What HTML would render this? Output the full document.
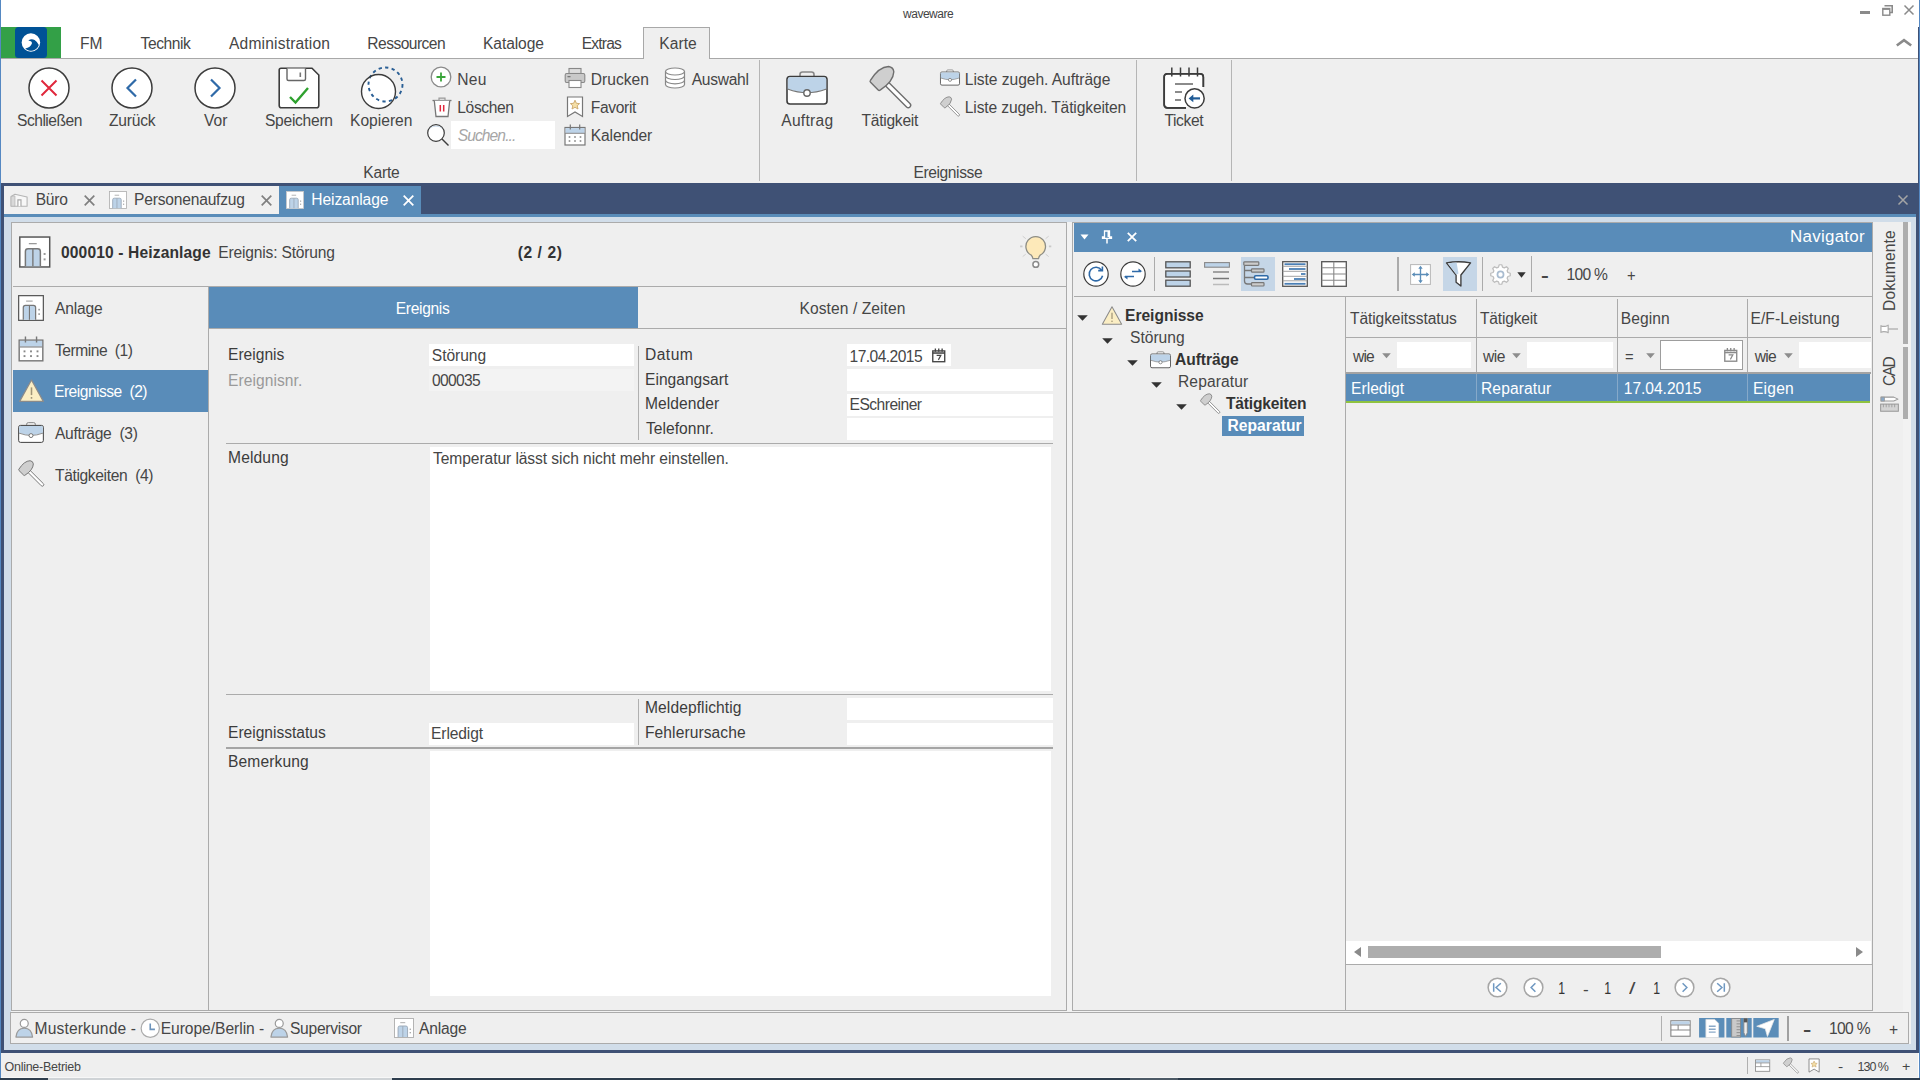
<!DOCTYPE html>
<html lang="de"><head><meta charset="utf-8"><title>waveware</title>
<style>
html,body{margin:0;padding:0;}
body{width:1920px;height:1080px;overflow:hidden;position:relative;background:#fff;font-family:"Liberation Sans",sans-serif;}
.a{position:absolute;}
.t{white-space:pre;margin:0;padding:0;}
svg{overflow:visible;}
</style></head><body>
<div class="a" style="left:0px;top:0px;width:1920px;height:1080px;background:#fff;"></div>
<div class="a" style="left:1px;top:59px;width:1917px;height:124px;background:#efefef;"></div>
<div class="a" style="left:1px;top:58px;width:1917px;height:1px;background:#a8a8a8;"></div>
<span class="a t" style="left:903.00px;top:7.30px;font-size:12px;line-height:14px;color:#444;letter-spacing:-0.479px;">waveware</span>
<div class="a" style="left:1860px;top:11px;width:10px;height:3px;background:#8a8a8a;"></div>
<svg style="position:absolute;left:1882px;top:5px" width="11" height="11" viewBox="0 0 11 11" ><path d="M2.5 0.8 H10.2 V7.5 H8" fill="none" stroke="#8a8a8a" stroke-width="1.6"/><rect x="0.8" y="3.5" width="7" height="6.7" fill="#fff" stroke="#8a8a8a" stroke-width="1.4"/><path d="M0.8 4 H7.8" stroke="#8a8a8a" stroke-width="1.8"/></svg>
<svg style="position:absolute;left:1904px;top:5px" width="10" height="10" viewBox="0 0 10 10" ><path d="M0.5 0.5 L9.5 9.5 M9.5 0.5 L0.5 9.5" stroke="#8a8a8a" stroke-width="1.5"/></svg>
<svg style="position:absolute;left:1896px;top:39px" width="16" height="7" viewBox="0 0 16 7" ><path d="M0.8 6.5 L8 1.2 L15.2 6.5" fill="none" stroke="#8a8a8a" stroke-width="2.6"/></svg>
<svg style="position:absolute;left:1px;top:27px" width="60" height="31" viewBox="0 0 60 31" ><rect x="0" y="0" width="60" height="31" fill="#33a047"/><rect x="14" y="0" width="32" height="31" rx="3.5" fill="#005296"/><circle cx="29.9" cy="15.55" r="9.25" fill="#fff"/><path d="M27.3 13.4 Q30.5 11.3 33.6 13 Q36.6 15 37.8 18 A8.3 8.3 0 0 1 24.2 21.6 Q29.6 20.4 30.9 16.6 Q31.4 14 27.3 13.4 Z" fill="#005296"/></svg>
<span class="a t" style="left:80.00px;top:35.08px;font-size:15.6px;line-height:17px;color:#464646;letter-spacing:-0.025px;">FM</span>
<span class="a t" style="left:140.60px;top:35.08px;font-size:15.6px;line-height:17px;color:#464646;letter-spacing:-0.446px;">Technik</span>
<span class="a t" style="left:229.00px;top:35.08px;font-size:15.6px;line-height:17px;color:#464646;letter-spacing:0.167px;">Administration</span>
<span class="a t" style="left:367.30px;top:35.08px;font-size:15.6px;line-height:17px;color:#464646;letter-spacing:-0.537px;">Ressourcen</span>
<span class="a t" style="left:483.00px;top:35.08px;font-size:15.6px;line-height:17px;color:#464646;letter-spacing:-0.084px;">Kataloge</span>
<span class="a t" style="left:581.70px;top:35.08px;font-size:15.6px;line-height:17px;color:#464646;letter-spacing:-0.819px;">Extras</span>
<div class="a" style="left:643px;top:27px;width:67px;height:32px;background:#efefef;border:1px solid #a8a8a8;box-sizing:border-box;border-bottom:none;"></div>
<span class="a t" style="left:659.30px;top:35.08px;font-size:15.6px;line-height:17px;color:#464646;letter-spacing:0.025px;">Karte</span>
<svg style="position:absolute;left:28px;top:67px" width="42" height="42" viewBox="0 0 42 42" ><circle cx="21" cy="21" r="20" fill="#fff" stroke="#3c3c3c" stroke-width="1.5"/><path d="M13.5 13.5 L28.5 28.5 M28.5 13.5 L13.5 28.5" stroke="#e0283c" stroke-width="2" fill="none"/></svg>
<svg style="position:absolute;left:111px;top:67px" width="42" height="42" viewBox="0 0 42 42" ><circle cx="21" cy="21" r="20" fill="#fff" stroke="#3c3c3c" stroke-width="1.5"/><path d="M25 12.5 L16.5 21 L25 29.5" stroke="#2f6aa8" stroke-width="2.2" fill="none"/></svg>
<svg style="position:absolute;left:194px;top:67px" width="42" height="42" viewBox="0 0 42 42" ><circle cx="21" cy="21" r="20" fill="#fff" stroke="#3c3c3c" stroke-width="1.5"/><path d="M17 12.5 L25.5 21 L17 29.5" stroke="#2f6aa8" stroke-width="2.2" fill="none"/></svg>
<svg style="position:absolute;left:277.5px;top:66.5px" width="42" height="42" viewBox="0 0 42 42" ><path d="M3 1.2 H34 L40.8 8 V38.5 Q40.8 40.8 38.5 40.8 H3.5 Q1.2 40.8 1.2 38.5 V3 Q1.2 1.2 3 1.2 Z" fill="#fff" stroke="#3c3c3c" stroke-width="1.6"/><path d="M9 1.5 V12 Q9 13.5 10.5 13.5 H26 Q27.5 13.5 27.5 12 V1.5" fill="#fff" stroke="#666" stroke-width="1.4"/><rect x="21.5" y="5.5" width="1.6" height="4.5" fill="#777"/><path d="M12 30 L17.5 35.5 L30 21" stroke="#2ea12e" stroke-width="2.4" fill="none"/></svg>
<svg style="position:absolute;left:359.5px;top:65.5px" width="44" height="44" viewBox="0 0 44 44" ><circle cx="18.5" cy="25.5" r="17" fill="#fff"/><circle cx="25.5" cy="18.5" r="17" fill="none" stroke="#2a5f95" stroke-width="1.9" stroke-dasharray="3.3 3.3"/><circle cx="18.5" cy="25.5" r="17" fill="none" stroke="#3c3c3c" stroke-width="1.4"/></svg>
<span class="a t" style="left:17.00px;top:112.08px;font-size:15.6px;line-height:17px;color:#464646;letter-spacing:-0.496px;">Schließen</span>
<span class="a t" style="left:109.00px;top:112.08px;font-size:15.6px;line-height:17px;color:#464646;letter-spacing:-0.232px;">Zurück</span>
<span class="a t" style="left:204.00px;top:112.08px;font-size:15.6px;line-height:17px;color:#464646;letter-spacing:0.044px;">Vor</span>
<span class="a t" style="left:265.00px;top:112.08px;font-size:15.6px;line-height:17px;color:#464646;letter-spacing:-0.281px;">Speichern</span>
<span class="a t" style="left:350.00px;top:112.08px;font-size:15.6px;line-height:17px;color:#464646;">Kopieren</span>
<svg style="position:absolute;left:430px;top:66px" width="22" height="22" viewBox="0 0 22 22" ><circle cx="11" cy="11" r="9.8" fill="#fff" stroke="#8a8a8a" stroke-width="1.3"/><path d="M11 6.5 V15.5 M6.5 11 H15.5" stroke="#3aa53a" stroke-width="1.8"/></svg>
<svg style="position:absolute;left:431px;top:96px" width="22" height="22" viewBox="0 0 22 22" ><path d="M1.5 4.5 H20.5" stroke="#777" stroke-width="1.3"/><path d="M8 4.3 V2.2 H14 V4.3" fill="none" stroke="#999" stroke-width="1.2"/><path d="M3.3 4.8 L5 20.5 H17 L18.7 4.8" fill="#fff" stroke="#777" stroke-width="1.3"/><path d="M9.3 9 V15.5 M12.7 9 V15.5" stroke="#e0283c" stroke-width="1.5"/></svg>
<svg style="position:absolute;left:426px;top:123px" width="24" height="24" viewBox="0 0 24 24" ><circle cx="10" cy="10" r="8.3" fill="#fff" stroke="#3c3c3c" stroke-width="1.2"/><path d="M3 6.5 A8.3 8.3 0 0 1 17 6.5 A9.5 9.5 0 0 0 3 6.5Z" fill="#bdd3e8"/><path d="M16 16 L22.5 22.5" stroke="#3c3c3c" stroke-width="1.4"/></svg>
<span class="a t" style="left:457.30px;top:70.58px;font-size:15.6px;line-height:17px;color:#464646;letter-spacing:0.233px;">Neu</span>
<span class="a t" style="left:457.30px;top:99.08px;font-size:15.6px;line-height:17px;color:#464646;letter-spacing:-0.381px;">Löschen</span>
<div class="a" style="left:451px;top:121px;width:104px;height:28px;background:#fff;"></div>
<span class="a t" style="left:457.70px;top:127.08px;font-size:15.6px;line-height:17px;color:#a6a6a6;font-style:italic;letter-spacing:-0.907px;">Suchen...</span>
<svg style="position:absolute;left:564px;top:67px" width="22" height="22" viewBox="0 0 22 22" ><rect x="5" y="1.5" width="12" height="5" fill="#ddd" stroke="#888" stroke-width="1.1"/><rect x="1.2" y="6.5" width="19.6" height="9" rx="1.5" fill="#c9c9c9" stroke="#888" stroke-width="1.1"/><rect x="5" y="13.5" width="12" height="7" fill="#fff" stroke="#888" stroke-width="1.1"/><rect x="3.5" y="9" width="3" height="1.3" fill="#777"/></svg>
<svg style="position:absolute;left:566px;top:96px" width="18" height="22" viewBox="0 0 18 22" ><path d="M1.5 1 H16.5 V20.5 L9 16 L1.5 20.5 Z" fill="#fff" stroke="#777" stroke-width="1.2"/><path d="M9 4.2 L10.4 7.3 L13.6 7.6 L11.2 9.8 L12 13 L9 11.3 L6 13 L6.8 9.8 L4.4 7.6 L7.6 7.3 Z" fill="#f5dfa6" stroke="#c9a66b" stroke-width="0.9"/></svg>
<svg style="position:absolute;left:564px;top:124px" width="22" height="22" viewBox="0 0 22 22" ><rect x="1" y="3.5" width="20" height="17.5" fill="#fff" stroke="#777" stroke-width="1.2"/><rect x="1.6" y="4.1" width="18.8" height="5" fill="#bdd3e8"/><path d="M1 9.3 H21" stroke="#888" stroke-width="1"/><path d="M6.3 0.5 V5.5 M15.7 0.5 V5.5" stroke="#777" stroke-width="1.2"/><rect x="4.7" y="12.2" width="1.6" height="1.6" fill="#888"/><rect x="10.2" y="12.2" width="1.6" height="1.6" fill="#888"/><rect x="15.7" y="12.2" width="1.6" height="1.6" fill="#888"/><rect x="4.7" y="16.2" width="1.6" height="1.6" fill="#888"/><rect x="10.2" y="16.2" width="1.6" height="1.6" fill="#888"/><rect x="15.7" y="16.2" width="1.6" height="1.6" fill="#888"/></svg>
<span class="a t" style="left:590.80px;top:70.58px;font-size:15.6px;line-height:17px;color:#464646;letter-spacing:0.018px;">Drucken</span>
<span class="a t" style="left:590.80px;top:99.08px;font-size:15.6px;line-height:17px;color:#464646;letter-spacing:-0.354px;">Favorit</span>
<span class="a t" style="left:590.80px;top:127.08px;font-size:15.6px;line-height:17px;color:#464646;letter-spacing:-0.147px;">Kalender</span>
<svg style="position:absolute;left:664px;top:67px" width="22" height="22" viewBox="0 0 22 22" ><path d="M1.5 4.5 V17.5 A9.5 3.5 0 0 0 20.5 17.5 V4.5" fill="#fff" stroke="#888" stroke-width="1.2"/><ellipse cx="11" cy="4.5" rx="9.5" ry="3.5" fill="#fff" stroke="#888" stroke-width="1.2"/><path d="M1.5 9 A9.5 3.5 0 0 0 20.5 9 M1.5 13.3 A9.5 3.5 0 0 0 20.5 13.3" fill="none" stroke="#888" stroke-width="1.2"/></svg>
<span class="a t" style="left:691.70px;top:70.58px;font-size:15.6px;line-height:17px;color:#464646;letter-spacing:-0.279px;">Auswahl</span>
<span class="a t" style="left:363.30px;top:164.08px;font-size:15.6px;line-height:17px;color:#464646;letter-spacing:-0.225px;">Karte</span>
<div class="a" style="left:759px;top:60px;width:1px;height:121px;background:#b5b5b5;"></div>
<svg style="position:absolute;left:786px;top:71px" width="42" height="34" viewBox="0 0 42 34" ><path d="M14 6 V3.5 Q14 1 16.5 1 H25.5 Q28 1 28 3.5 V6" fill="none" stroke="#888" stroke-width="1.6"/><rect x="1" y="5.5" width="40" height="27.5" rx="3" fill="#fff" stroke="#3c3c3c" stroke-width="1.6"/><path d="M1.8 8 Q1.8 6.3 4 6.3 H38 Q40.2 6.3 40.2 8 V18 Q30 21.5 21 21.5 Q12 21.5 1.8 18 Z" fill="#bdd3e8"/><path d="M1.5 18 Q12 21.8 21 21.8 Q30 21.8 40.5 18" fill="none" stroke="#777" stroke-width="1.3"/><circle cx="21" cy="22" r="3.2" fill="#fff" stroke="#666" stroke-width="1.4"/></svg>
<svg style="position:absolute;left:868.5px;top:66.8px" width="42" height="42" viewBox="0 0 42 42" ><g transform="rotate(-45 21 21)"><rect x="19.3" y="12" width="4.8" height="36.5" rx="2.4" fill="#fff" stroke="#6e6e6e" stroke-width="1.4"/><path d="M11.3 3.2 Q11.3 1.9 12.6 1.7 Q28 -1.8 35.2 4.8 Q38 8.6 35.2 12.2 Q28 18.8 12.6 15.5 Q11.3 15.3 11.3 14 Z" fill="#cfcfcf" stroke="#6e6e6e" stroke-width="1.4" stroke-linejoin="round"/></g></svg>
<span class="a t" style="left:781.30px;top:112.08px;font-size:15.6px;line-height:17px;color:#464646;letter-spacing:0.249px;">Auftrag</span>
<span class="a t" style="left:861.50px;top:112.08px;font-size:15.6px;line-height:17px;color:#464646;letter-spacing:-0.263px;">Tätigkeit</span>
<svg style="position:absolute;left:940px;top:69px" width="20" height="17" viewBox="0 0 42 34" ><path d="M14 6 V3.5 Q14 1 16.5 1 H25.5 Q28 1 28 3.5 V6" fill="none" stroke="#888" stroke-width="1.6"/><rect x="1" y="5.5" width="40" height="27.5" rx="3" fill="#fff" stroke="#3c3c3c" stroke-width="1.6"/><path d="M1.8 8 Q1.8 6.3 4 6.3 H38 Q40.2 6.3 40.2 8 V18 Q30 21.5 21 21.5 Q12 21.5 1.8 18 Z" fill="#bdd3e8"/><path d="M1.5 18 Q12 21.8 21 21.8 Q30 21.8 40.5 18" fill="none" stroke="#777" stroke-width="1.3"/><circle cx="21" cy="22" r="3.2" fill="#fff" stroke="#666" stroke-width="1.4"/></svg>
<svg style="position:absolute;left:940.2px;top:96.5px" width="19.7" height="19.7" viewBox="0 0 42 42" ><g transform="rotate(-45 21 21)"><rect x="19.3" y="12" width="4.8" height="36.5" rx="2.4" fill="#fff" stroke="#6e6e6e" stroke-width="1.4"/><path d="M11.3 3.2 Q11.3 1.9 12.6 1.7 Q28 -1.8 35.2 4.8 Q38 8.6 35.2 12.2 Q28 18.8 12.6 15.5 Q11.3 15.3 11.3 14 Z" fill="#cfcfcf" stroke="#6e6e6e" stroke-width="1.4" stroke-linejoin="round"/></g></svg>
<span class="a t" style="left:964.80px;top:70.58px;font-size:15.6px;line-height:17px;color:#464646;letter-spacing:-0.050px;">Liste zugeh. Aufträge</span>
<span class="a t" style="left:964.80px;top:99.08px;font-size:15.6px;line-height:17px;color:#464646;letter-spacing:-0.132px;">Liste zugeh. Tätigkeiten</span>
<span class="a t" style="left:913.40px;top:164.08px;font-size:15.6px;line-height:17px;color:#464646;letter-spacing:-0.393px;">Ereignisse</span>
<div class="a" style="left:1136px;top:60px;width:1px;height:121px;background:#b5b5b5;"></div>
<svg style="position:absolute;left:1162px;top:66px" width="44" height="44" viewBox="0 0 44 44" ><path d="M41.3 21 V11 Q41.3 7.8 38 7.8 H5.5 Q2.2 7.8 2.2 11 V38.5 Q2.2 41.8 5.5 41.8 H24" fill="#fff" stroke="#3c3c3c" stroke-width="1.7"/><rect x="3" y="8.6" width="37.4" height="32.4" rx="2.5" fill="#fff"/><path d="M41.3 21 V11 Q41.3 7.8 38 7.8 H5.5 Q2.2 7.8 2.2 11 V38.5 Q2.2 41.8 5.5 41.8 H24" fill="none" stroke="#3c3c3c" stroke-width="1.7"/><path d="M9.8 1.5 V10.5" stroke="#3c3c3c" stroke-width="1.5"/><path d="M18.5 1.5 V10.5" stroke="#3c3c3c" stroke-width="1.5"/><path d="M27 1.5 V10.5" stroke="#3c3c3c" stroke-width="1.5"/><path d="M35.5 1.5 V10.5" stroke="#3c3c3c" stroke-width="1.5"/><path d="M13 18 H31 M13 26 H20 M13 34 H19" stroke="#666" stroke-width="1.5"/><circle cx="32.6" cy="32.4" r="9.6" fill="#fff" stroke="#3c3c3c" stroke-width="1.5"/><path d="M29 32.4 H38" stroke="#1f5b96" stroke-width="2.2"/><path d="M31.3 28.6 L26.6 32.4 L31.3 36.2 Z" fill="#1f5b96"/></svg>
<span class="a t" style="left:1164.50px;top:112.08px;font-size:15.6px;line-height:17px;color:#464646;letter-spacing:-0.395px;">Ticket</span>
<div class="a" style="left:1231px;top:60px;width:1px;height:121px;background:#b5b5b5;"></div>
<div class="a" style="left:1px;top:183px;width:1919px;height:870px;background:#3f5175;"></div>
<div class="a" style="left:4px;top:186px;width:275px;height:28px;background:#f0f0f0;"></div>
<div class="a" style="left:279px;top:186px;width:142px;height:28px;background:#598cb9;"></div>
<div class="a" style="left:4px;top:214px;width:1912px;height:3px;background:#598cb9;"></div>
<div class="a" style="left:4px;top:217px;width:1912px;height:833px;background:#d1dde9;"></div>
<div class="a" style="left:11px;top:222px;width:1900px;height:822px;background:#f2f2f2;"></div>
<svg style="position:absolute;left:10px;top:191.5px" width="18" height="16.5" viewBox="0 0 20 18" ><path d="M1.2 4.8 L5.5 2.4 L19 5.4 V15.6 H1.2 Z" fill="#f7f7f7" stroke="#b4b4b4" stroke-width="1.2" stroke-linejoin="round"/><path d="M1.2 4.8 L5.5 4.2 V15.6 H1.2Z" fill="#d9d9d9" stroke="#b4b4b4" stroke-width="0.8"/><path d="M8.8 15.6 V8.6 H12.2 V15.6" fill="#fff" stroke="#a8a8a8" stroke-width="1.3"/></svg>
<span class="a t" style="left:35.70px;top:191.18px;font-size:15.6px;line-height:17px;color:#464646;letter-spacing:-0.222px;">Büro</span>
<svg style="position:absolute;left:84px;top:195px" width="11" height="11" viewBox="0 0 11 11" ><path d="M0.7 0.7 L10.3 10.3 M10.3 0.7 L0.7 10.3" stroke="#808080" stroke-width="1.7"/></svg>
<svg style="position:absolute;left:109px;top:191px" width="18" height="18" viewBox="0 0 32 32" ><rect x="0.8" y="0.8" width="30.4" height="30.4" fill="#fff" stroke="#b0b0b0" stroke-width="1.5"/><path d="M10 7.5 H18" stroke="#999" stroke-width="1.3"/><path d="M6.5 30.5 V15.5 Q6.5 12.8 9.2 12.8 H19 Q21.7 12.8 21.7 15.5 V30.5" fill="#bdd3e8" stroke="#9aa7b5" stroke-width="1.5"/><path d="M14.1 13 V30.5" stroke="#9aa7b5" stroke-width="1.4"/><rect x="25" y="17" width="2" height="2" fill="#999"/><rect x="25" y="22.5" width="2" height="2" fill="#999"/></svg>
<span class="a t" style="left:134.00px;top:191.18px;font-size:15.6px;line-height:17px;color:#464646;letter-spacing:-0.200px;">Personenaufzug</span>
<svg style="position:absolute;left:260.5px;top:195px" width="11" height="11" viewBox="0 0 11 11" ><path d="M0.7 0.7 L10.3 10.3 M10.3 0.7 L0.7 10.3" stroke="#808080" stroke-width="1.7"/></svg>
<svg style="position:absolute;left:286px;top:191px" width="18" height="18" viewBox="0 0 32 32" ><rect x="0.8" y="0.8" width="30.4" height="30.4" fill="#fff" stroke="#c8c8c8" stroke-width="1.5"/><path d="M10 7.5 H18" stroke="#999" stroke-width="1.3"/><path d="M6.5 30.5 V15.5 Q6.5 12.8 9.2 12.8 H19 Q21.7 12.8 21.7 15.5 V30.5" fill="#bdd3e8" stroke="#9aa7b5" stroke-width="1.5"/><path d="M14.1 13 V30.5" stroke="#9aa7b5" stroke-width="1.4"/><rect x="25" y="17" width="2" height="2" fill="#999"/><rect x="25" y="22.5" width="2" height="2" fill="#999"/></svg>
<span class="a t" style="left:311.30px;top:191.18px;font-size:15.6px;line-height:17px;color:#fff;letter-spacing:-0.106px;">Heizanlage</span>
<svg style="position:absolute;left:402.5px;top:195px" width="11" height="11" viewBox="0 0 11 11" ><path d="M0.7 0.7 L10.3 10.3 M10.3 0.7 L0.7 10.3" stroke="#fff" stroke-width="1.8"/></svg>
<svg style="position:absolute;left:1898px;top:195px" width="10" height="10" viewBox="0 0 10 10" ><path d="M0.5 0.5 L9.5 9.5 M9.5 0.5 L0.5 9.5" stroke="#a5a5a5" stroke-width="1.5"/></svg>
<div class="a" style="left:11px;top:222px;width:1056px;height:789px;background:#efefef;border:1px solid #ababab;box-sizing:border-box;"></div>
<svg style="position:absolute;left:19px;top:236px" width="31.5" height="32" viewBox="0 0 32 32" ><rect x="0.8" y="0.8" width="30.4" height="30.4" fill="#fff" stroke="#555" stroke-width="1.5"/><path d="M10 7.5 H18" stroke="#999" stroke-width="1.3"/><path d="M6.5 30.5 V15.5 Q6.5 12.8 9.2 12.8 H19 Q21.7 12.8 21.7 15.5 V30.5" fill="#bdd3e8" stroke="#777" stroke-width="1.5"/><path d="M14.1 13 V30.5" stroke="#777" stroke-width="1.4"/><rect x="25" y="17" width="2" height="2" fill="#999"/><rect x="25" y="22.5" width="2" height="2" fill="#999"/></svg>
<span class="a t" style="left:61.00px;top:244.08px;font-size:15.6px;line-height:17px;color:#333;font-weight:bold;letter-spacing:0.129px;">000010 - Heizanlage</span>
<span class="a t" style="left:218.30px;top:244.08px;font-size:15.6px;line-height:17px;color:#464646;letter-spacing:-0.184px;">Ereignis: Störung</span>
<span class="a t" style="left:517.70px;top:244.08px;font-size:15.6px;line-height:17px;color:#333;font-weight:bold;letter-spacing:0.577px;">(2 / 2)</span>
<svg style="position:absolute;left:1010px;top:226px" width="52" height="50" viewBox="0 0 52 50" ><path d="M21.1 29.0 Q22.7 30.599999999999998 22.9 32.7 H28.5 Q28.7 30.599999999999998 30.299999999999997 29.0 A9.8 9.8 0 1 0 21.1 29.0Z" fill="#fde9b9" stroke="#8d8d85" stroke-width="1.3" stroke-linejoin="round"/><circle cx="25.8" cy="38.4" r="2.9" fill="#fff" stroke="#8a8a8a" stroke-width="1.5"/><path d="M38.9 20.4 L41.3 20.4" stroke="#c9c9c9" stroke-width="1.8"/><path d="M12.5 20.4 L10.1 20.4" stroke="#c9c9c9" stroke-width="1.8"/><path d="M35.6 12.7 L38.7 10.2" stroke="#cfcfcf" stroke-width="1"/><path d="M15.8 12.7 L12.7 10.2" stroke="#cfcfcf" stroke-width="1"/><path d="M15.8 28.1 L12.7 30.6" stroke="#cfcfcf" stroke-width="1"/><path d="M35.6 28.1 L38.7 30.6" stroke="#cfcfcf" stroke-width="1"/></svg>
<div class="a" style="left:13px;top:286px;width:1053px;height:1px;background:#ababab;"></div>
<div class="a" style="left:208px;top:287px;width:1px;height:723px;background:#ababab;"></div>
<div class="a" style="left:13px;top:370px;width:195px;height:42px;background:#598cb9;"></div>
<span class="a t" style="left:55.00px;top:299.58px;font-size:15.6px;line-height:17px;color:#464646;letter-spacing:-0.177px;">Anlage</span>
<svg style="position:absolute;left:18px;top:295px" width="26" height="26" viewBox="0 0 32 32" ><rect x="0.8" y="0.8" width="30.4" height="30.4" fill="#fff" stroke="#555" stroke-width="1.5"/><path d="M10 7.5 H18" stroke="#999" stroke-width="1.3"/><path d="M6.5 30.5 V15.5 Q6.5 12.8 9.2 12.8 H19 Q21.7 12.8 21.7 15.5 V30.5" fill="#bdd3e8" stroke="#777" stroke-width="1.5"/><path d="M14.1 13 V30.5" stroke="#777" stroke-width="1.4"/><rect x="25" y="17" width="2" height="2" fill="#999"/><rect x="25" y="22.5" width="2" height="2" fill="#999"/></svg>
<span class="a t" style="left:55.00px;top:341.58px;font-size:15.6px;line-height:17px;color:#464646;letter-spacing:-0.481px;">Termine  (1)</span>
<svg style="position:absolute;left:18px;top:336px" width="26" height="26" viewBox="0 0 22 22" ><rect x="1" y="3.5" width="20" height="17.5" fill="#fff" stroke="#777" stroke-width="1.2"/><rect x="1.6" y="4.1" width="18.8" height="5" fill="#bdd3e8"/><path d="M1 9.3 H21" stroke="#888" stroke-width="1"/><path d="M6.3 0.5 V5.5 M15.7 0.5 V5.5" stroke="#777" stroke-width="1.2"/><rect x="4.7" y="12.2" width="1.6" height="1.6" fill="#888"/><rect x="10.2" y="12.2" width="1.6" height="1.6" fill="#888"/><rect x="15.7" y="12.2" width="1.6" height="1.6" fill="#888"/><rect x="4.7" y="16.2" width="1.6" height="1.6" fill="#888"/><rect x="10.2" y="16.2" width="1.6" height="1.6" fill="#888"/><rect x="15.7" y="16.2" width="1.6" height="1.6" fill="#888"/></svg>
<span class="a t" style="left:54.00px;top:383.08px;font-size:15.6px;line-height:17px;color:#fff;letter-spacing:-0.503px;">Ereignisse  (2)</span>
<svg style="position:absolute;left:17.5px;top:378px" width="27" height="25.5" viewBox="0 0 28 26" ><path d="M14 1.8 L26.3 24 H1.7 Z" fill="#fbeec4" stroke="#8a8a8a" stroke-width="1.3" stroke-linejoin="round"/><path d="M14 9.5 V17.5" stroke="#a09578" stroke-width="1.6"/><rect x="13.2" y="19.5" width="1.6" height="1.8" fill="#a09578"/></svg>
<span class="a t" style="left:55.00px;top:424.58px;font-size:15.6px;line-height:17px;color:#464646;letter-spacing:-0.315px;">Aufträge  (3)</span>
<svg style="position:absolute;left:18px;top:422px" width="26" height="21" viewBox="0 0 42 34" ><path d="M14 6 V3.5 Q14 1 16.5 1 H25.5 Q28 1 28 3.5 V6" fill="none" stroke="#888" stroke-width="1.6"/><rect x="1" y="5.5" width="40" height="27.5" rx="3" fill="#fff" stroke="#3c3c3c" stroke-width="1.6"/><path d="M1.8 8 Q1.8 6.3 4 6.3 H38 Q40.2 6.3 40.2 8 V18 Q30 21.5 21 21.5 Q12 21.5 1.8 18 Z" fill="#bdd3e8"/><path d="M1.5 18 Q12 21.8 21 21.8 Q30 21.8 40.5 18" fill="none" stroke="#777" stroke-width="1.3"/><circle cx="21" cy="22" r="3.2" fill="#fff" stroke="#666" stroke-width="1.4"/></svg>
<span class="a t" style="left:55.00px;top:466.58px;font-size:15.6px;line-height:17px;color:#464646;letter-spacing:-0.367px;">Tätigkeiten  (4)</span>
<svg style="position:absolute;left:18px;top:461px" width="26" height="26" viewBox="0 0 42 42" ><g transform="rotate(-45 21 21)"><rect x="19.3" y="12" width="4.8" height="36.5" rx="2.4" fill="#fff" stroke="#6e6e6e" stroke-width="1.4"/><path d="M11.3 3.2 Q11.3 1.9 12.6 1.7 Q28 -1.8 35.2 4.8 Q38 8.6 35.2 12.2 Q28 18.8 12.6 15.5 Q11.3 15.3 11.3 14 Z" fill="#cfcfcf" stroke="#6e6e6e" stroke-width="1.4" stroke-linejoin="round"/></g></svg>
<div class="a" style="left:209px;top:287px;width:429px;height:41px;background:#598cb9;"></div>
<div class="a" style="left:209px;top:328px;width:857px;height:1px;background:#ababab;"></div>
<span class="a t" style="left:395.80px;top:300.08px;font-size:15.6px;line-height:17px;color:#fff;letter-spacing:-0.334px;">Ereignis</span>
<span class="a t" style="left:799.50px;top:300.08px;font-size:15.6px;line-height:17px;color:#464646;letter-spacing:0.071px;">Kosten / Zeiten</span>
<div class="a" style="left:429px;top:344px;width:205px;height:22px;background:#fff;"></div>
<div class="a" style="left:429px;top:369px;width:205px;height:22px;background:#f3f3f3;"></div>
<div class="a" style="left:847px;top:344px;width:104px;height:22px;background:#fff;"></div>
<div class="a" style="left:847px;top:369px;width:206px;height:22px;background:#fff;"></div>
<div class="a" style="left:847px;top:394px;width:206px;height:22px;background:#fff;"></div>
<div class="a" style="left:847px;top:418px;width:206px;height:22px;background:#fff;"></div>
<div class="a" style="left:638px;top:346px;width:1px;height:94px;background:#b0b0b0;"></div>
<span class="a t" style="left:228.00px;top:345.58px;font-size:15.6px;line-height:17px;color:#3c3c3c;">Ereignis</span>
<span class="a t" style="left:228.00px;top:371.58px;font-size:15.6px;line-height:17px;color:#9a9a9a;letter-spacing:0.066px;">Ereignisnr.</span>
<span class="a t" style="left:431.80px;top:347.08px;font-size:15.6px;line-height:17px;color:#464646;letter-spacing:-0.041px;">Störung</span>
<span class="a t" style="left:432.00px;top:372.08px;font-size:15.6px;line-height:17px;color:#464646;letter-spacing:-0.673px;">000035</span>
<span class="a t" style="left:645.00px;top:345.58px;font-size:15.6px;line-height:17px;color:#3c3c3c;letter-spacing:0.465px;">Datum</span>
<span class="a t" style="left:645.00px;top:370.58px;font-size:15.6px;line-height:17px;color:#3c3c3c;letter-spacing:0.011px;">Eingangsart</span>
<span class="a t" style="left:645.00px;top:395.08px;font-size:15.6px;line-height:17px;color:#3c3c3c;letter-spacing:0.064px;">Meldender</span>
<span class="a t" style="left:646.00px;top:419.58px;font-size:15.6px;line-height:17px;color:#3c3c3c;letter-spacing:0.024px;">Telefonnr.</span>
<span class="a t" style="left:849.50px;top:347.58px;font-size:15.6px;line-height:17px;color:#464646;letter-spacing:-0.541px;">17.04.2015</span>
<svg style="position:absolute;left:932px;top:347.5px" width="13.5" height="14.5" viewBox="0 0 14 15" ><rect x="0.8" y="3" width="12.4" height="11.2" fill="#fff" stroke="#444" stroke-width="1.4"/><path d="M0.8 5.2 H13.2" stroke="#444" stroke-width="1.6"/><path d="M3.5 0.5 V4 M7 0.5 V4 M10.5 0.5 V4" stroke="#444" stroke-width="1.4"/><path d="M4.8 7.6 H9.2 L6.6 12.3" fill="none" stroke="#444" stroke-width="1.2"/></svg>
<span class="a t" style="left:849.50px;top:396.08px;font-size:15.6px;line-height:17px;color:#464646;letter-spacing:-0.516px;">ESchreiner</span>
<div class="a" style="left:226px;top:443px;width:827px;height:1px;background:#ababab;"></div>
<div class="a" style="left:430px;top:447px;width:621px;height:244px;background:#fff;"></div>
<span class="a t" style="left:228.00px;top:449.08px;font-size:15.6px;line-height:17px;color:#3c3c3c;letter-spacing:0.143px;">Meldung</span>
<span class="a t" style="left:433.00px;top:450.08px;font-size:15.6px;line-height:17px;color:#464646;letter-spacing:-0.074px;">Temperatur lässt sich nicht mehr einstellen.</span>
<div class="a" style="left:226px;top:694px;width:827px;height:1px;background:#ababab;"></div>
<div class="a" style="left:638px;top:699px;width:1px;height:46px;background:#b0b0b0;"></div>
<div class="a" style="left:847px;top:698px;width:206px;height:22px;background:#fff;"></div>
<div class="a" style="left:847px;top:723px;width:206px;height:22px;background:#fff;"></div>
<div class="a" style="left:429px;top:723px;width:205px;height:22px;background:#fff;"></div>
<span class="a t" style="left:645.00px;top:698.58px;font-size:15.6px;line-height:17px;color:#3c3c3c;letter-spacing:0.087px;">Meldepflichtig</span>
<span class="a t" style="left:645.00px;top:723.58px;font-size:15.6px;line-height:17px;color:#3c3c3c;letter-spacing:0.083px;">Fehlerursache</span>
<span class="a t" style="left:228.00px;top:723.58px;font-size:15.6px;line-height:17px;color:#3c3c3c;letter-spacing:-0.011px;">Ereignisstatus</span>
<span class="a t" style="left:431.00px;top:725.08px;font-size:15.6px;line-height:17px;color:#464646;letter-spacing:-0.106px;">Erledigt</span>
<div class="a" style="left:226px;top:747px;width:827px;height:2px;background:#a5a5a5;"></div>
<div class="a" style="left:430px;top:751px;width:621px;height:245px;background:#fff;"></div>
<span class="a t" style="left:228.00px;top:752.58px;font-size:15.6px;line-height:17px;color:#3c3c3c;letter-spacing:0.116px;">Bemerkung</span>
<div class="a" style="left:10px;top:1012px;width:1899px;height:32px;background:#efefef;border:1px solid #ababab;box-sizing:border-box;"></div>
<svg style="position:absolute;left:15px;top:1018px" width="18.5" height="20.5" viewBox="0 0 20 22" ><circle cx="10" cy="5.8" r="4.3" fill="#fff" stroke="#999" stroke-width="1.3"/><path d="M1 20.5 Q2 11 10 11 Q18 11 19 20.5 Z" fill="#bdd3e8" stroke="#999" stroke-width="1.3" stroke-linejoin="round"/></svg>
<span class="a t" style="left:34.50px;top:1020.08px;font-size:15.6px;line-height:17px;color:#464646;letter-spacing:0.152px;">Musterkunde -</span>
<svg style="position:absolute;left:140px;top:1018px" width="20.5" height="20.5" viewBox="0 0 22 22" ><circle cx="11" cy="11" r="9.8" fill="#fff" stroke="#aaa" stroke-width="1.3"/><path d="M11 6 V12.2 H16" fill="none" stroke="#6c93bb" stroke-width="1.7"/></svg>
<span class="a t" style="left:160.70px;top:1020.08px;font-size:15.6px;line-height:17px;color:#464646;letter-spacing:-0.037px;">Europe/Berlin -</span>
<svg style="position:absolute;left:270px;top:1018px" width="18.5" height="20.5" viewBox="0 0 20 22" ><circle cx="10" cy="5.8" r="4.3" fill="#fff" stroke="#999" stroke-width="1.3"/><path d="M1 20.5 Q2 11 10 11 Q18 11 19 20.5 Z" fill="#bdd3e8" stroke="#999" stroke-width="1.3" stroke-linejoin="round"/></svg>
<span class="a t" style="left:290.00px;top:1020.08px;font-size:15.6px;line-height:17px;color:#464646;letter-spacing:-0.282px;">Supervisor</span>
<svg style="position:absolute;left:394px;top:1018px" width="20" height="20" viewBox="0 0 32 32" ><rect x="0.8" y="0.8" width="30.4" height="30.4" fill="#fff" stroke="#b0b0b0" stroke-width="1.5"/><path d="M10 7.5 H18" stroke="#999" stroke-width="1.3"/><path d="M6.5 30.5 V15.5 Q6.5 12.8 9.2 12.8 H19 Q21.7 12.8 21.7 15.5 V30.5" fill="#bdd3e8" stroke="#9aa7b5" stroke-width="1.5"/><path d="M14.1 13 V30.5" stroke="#9aa7b5" stroke-width="1.4"/><rect x="25" y="17" width="2" height="2" fill="#999"/><rect x="25" y="22.5" width="2" height="2" fill="#999"/></svg>
<span class="a t" style="left:419.00px;top:1020.08px;font-size:15.6px;line-height:17px;color:#464646;letter-spacing:-0.177px;">Anlage</span>
<div class="a" style="left:1661px;top:1016px;width:1px;height:25px;background:#b0b0b0;"></div>
<svg style="position:absolute;left:1670px;top:1019.5px" width="21" height="17" viewBox="0 0 22 18" ><rect x="0.8" y="0.8" width="20.4" height="16.4" fill="#fff" stroke="#888" stroke-width="1.2"/><rect x="1.4" y="1.4" width="19.2" height="3.4" fill="#bdd3e8"/><path d="M0.8 5.2 H21.2 M0.8 10.5 H21.2 M8.5 5.2 V10.5" stroke="#888" stroke-width="1.1" fill="none"/></svg>
<svg style="position:absolute;left:1699px;top:1018px" width="25.5" height="19.5" viewBox="0 0 26 20" ><rect width="26" height="20" fill="#5b8db8"/><path d="M7 1.5 H16 L20 5.5 V20 H7Z" fill="#fff" stroke="#ddd" stroke-width="0.8"/><path d="M10 8.5 H17 M10 11.5 H17 M10 14.5 H17" stroke="#8aa9c8" stroke-width="1.4"/></svg>
<svg style="position:absolute;left:1726px;top:1018px" width="26" height="19.5" viewBox="0 0 26 20" ><rect width="26" height="20" fill="#5b8db8"/><rect x="5.5" y="0.5" width="9" height="19" fill="#c9c9c9" stroke="#888" stroke-width="0.9"/><path d="M10.5 3 H14.5" stroke="#888" stroke-width="0.9"/><path d="M10.5 6 H14.5" stroke="#888" stroke-width="0.9"/><path d="M10.5 9 H14.5" stroke="#888" stroke-width="0.9"/><path d="M10.5 12 H14.5" stroke="#888" stroke-width="0.9"/><path d="M10.5 15 H14.5" stroke="#888" stroke-width="0.9"/><path d="M10.5 18 H14.5" stroke="#888" stroke-width="0.9"/><path d="M18 0.5 H21.5 V15 L19.75 19 L18 15Z" fill="#eee" stroke="#888" stroke-width="0.9"/><rect x="18" y="0.5" width="3.5" height="4" fill="#555"/></svg>
<svg style="position:absolute;left:1753px;top:1018px" width="26" height="19.5" viewBox="0 0 26 20" ><rect width="26" height="20" fill="#5b8db8"/><path d="M3.5 8.5 L21.5 1.5 L14.5 19 L12.2 11 Z" fill="#fff" stroke="#e8e8e8" stroke-width="0.8" stroke-linejoin="round"/></svg>
<div class="a" style="left:1787px;top:1016px;width:2px;height:25px;background:#a0a0a0;"></div>
<span class="a t" style="left:1802.50px;top:1021.08px;font-size:15.6px;line-height:17px;color:#464646;font-weight:bold;transform-origin:0.00px 50%;transform:scaleX(1.600);">-</span>
<span class="a t" style="left:1829.00px;top:1020.08px;font-size:15.6px;line-height:17px;color:#464646;letter-spacing:-0.637px;">100 %</span>
<span class="a t" style="left:1889.00px;top:1020.58px;font-size:15.6px;line-height:17px;color:#464646;transform-origin:0.00px 50%;transform:scaleX(1.000);">+</span>
<div class="a" style="left:1px;top:1053px;width:1917px;height:25px;background:#efefef;"></div>
<span class="a t" style="left:4.50px;top:1059.97px;font-size:12.5px;line-height:14px;color:#464646;letter-spacing:-0.265px;">Online-Betrieb</span>
<div class="a" style="left:1747px;top:1057px;width:1px;height:17px;background:#b0b0b0;"></div>
<svg style="position:absolute;left:1755.3px;top:1059.3px" width="15.3" height="13.2" viewBox="0 0 22 18" ><rect x="0.8" y="0.8" width="20.4" height="16.4" fill="#fff" stroke="#888" stroke-width="1.2"/><rect x="1.4" y="1.4" width="19.2" height="3.4" fill="#bdd3e8"/><path d="M0.8 5.2 H21.2 M0.8 10.5 H21.2 M8.5 5.2 V10.5" stroke="#888" stroke-width="1.1" fill="none"/></svg>
<svg style="position:absolute;left:1783.2px;top:1057.7px" width="15.6" height="15.6" viewBox="0 0 42 42" ><g transform="rotate(-45 21 21)"><rect x="19.3" y="12" width="4.8" height="36.5" rx="2.4" fill="#fff" stroke="#6e6e6e" stroke-width="1.4"/><path d="M11.3 3.2 Q11.3 1.9 12.6 1.7 Q28 -1.8 35.2 4.8 Q38 8.6 35.2 12.2 Q28 18.8 12.6 15.5 Q11.3 15.3 11.3 14 Z" fill="#cfcfcf" stroke="#6e6e6e" stroke-width="1.4" stroke-linejoin="round"/></g></svg>
<svg style="position:absolute;left:1808px;top:1058.2px" width="12.2" height="15.4" viewBox="0 0 18 22" ><path d="M1.5 1 H16.5 V20.5 L9 16 L1.5 20.5 Z" fill="#fff" stroke="#777" stroke-width="1.2"/><path d="M9 4.2 L10.4 7.3 L13.6 7.6 L11.2 9.8 L12 13 L9 11.3 L6 13 L6.8 9.8 L4.4 7.6 L7.6 7.3 Z" fill="#f5dfa6" stroke="#c9a66b" stroke-width="0.9"/></svg>
<span class="a t" style="left:1838.00px;top:1060.47px;font-size:12.5px;line-height:14px;color:#464646;transform-origin:0.00px 50%;transform:scaleX(1.250);">-</span>
<span class="a t" style="left:1857.50px;top:1059.97px;font-size:12.5px;line-height:14px;color:#464646;letter-spacing:-1.007px;">130 %</span>
<span class="a t" style="left:1902.00px;top:1060.47px;font-size:12.5px;line-height:14px;color:#464646;transform-origin:0.00px 50%;transform:scaleX(1.143);">+</span>
<div class="a" style="left:0px;top:1078px;width:1920px;height:2px;background:#2e3d4d;"></div>
<div class="a" style="left:0px;top:1077px;width:1920px;height:1px;background:#f7f7f7;"></div>
<div class="a" style="left:48px;top:1078px;width:344px;height:2px;background:#cfd3d6;"></div>
<div class="a" style="left:1130px;top:1078px;width:48px;height:2px;background:#4d5a66;"></div>
<div class="a" style="left:0px;top:0px;width:1px;height:1078px;background:#5588c2;"></div>
<div class="a" style="left:1919px;top:0px;width:1px;height:1078px;background:#5588c2;"></div>
<div class="a" style="left:1918px;top:27px;width:1px;height:156px;background:#3f5175;"></div>
<div class="a" style="left:1072px;top:222px;width:1801px;height:789px;background:#efefef;border:1px solid #ababab;box-sizing:border-box;width:801px;"></div>
<div class="a" style="left:1074px;top:223px;width:798px;height:29px;background:#598cb9;"></div>
<svg style="position:absolute;left:1080px;top:234px" width="9" height="6" viewBox="0 0 9 6" ><path d="M0.5 0.5 H8.5 L4.5 5.5Z" fill="#fff"/></svg>
<svg style="position:absolute;left:1101px;top:230px" width="12" height="14" viewBox="0 0 12 14" ><path d="M3.5 1 H8.5 V7 H10.5 V8.3 H1.5 V7 H3.5Z" fill="none" stroke="#fff" stroke-width="1.3"/><path d="M7.3 1 V7" stroke="#fff" stroke-width="1.6"/><path d="M6 8.3 V13.5" stroke="#fff" stroke-width="1.5"/></svg>
<svg style="position:absolute;left:1127px;top:232px" width="10" height="10" viewBox="0 0 10 10" ><path d="M0.8 0.8 L9.2 9.2 M9.2 0.8 L0.8 9.2" stroke="#fff" stroke-width="1.8"/></svg>
<span class="a t" style="left:1790.00px;top:226.85px;font-size:16.9px;line-height:19px;color:#fff;letter-spacing:0.292px;">Navigator</span>
<svg style="position:absolute;left:1083px;top:261px" width="26" height="26" viewBox="0 0 26 26" ><circle cx="13" cy="13" r="12.2" fill="#fff" stroke="#3c3c3c" stroke-width="1.2"/><path d="M18.6 9.2 A6.8 6.8 0 1 0 19.6 14.8" fill="none" stroke="#2f6aa8" stroke-width="1.6"/><path d="M15.2 9.6 H19.4 V5.4" fill="none" stroke="#2f6aa8" stroke-width="1.6"/></svg>
<svg style="position:absolute;left:1120px;top:261px" width="26" height="26" viewBox="0 0 26 26" ><circle cx="13" cy="13" r="12.2" fill="#fff" stroke="#3c3c3c" stroke-width="1.2"/><path d="M12 10.5 H21" stroke="#2f6aa8" stroke-width="1.5"/><path d="M18.5 7.5 L22.5 10.5 H18.5Z" fill="#2f6aa8"/><path d="M14 15.5 H5" stroke="#2f6aa8" stroke-width="1.5"/><path d="M7.5 18.5 L3.5 15.5 H7.5Z" fill="#2f6aa8"/></svg>
<div class="a" style="left:1154px;top:257px;width:1px;height:34px;background:#ababab;"></div>
<svg style="position:absolute;left:1165px;top:261px" width="26" height="26" viewBox="0 0 26 26" ><rect x="0.8" y="0.8" width="24.4" height="6" fill="#bdd3e8" stroke="#555" stroke-width="1.3"/><rect x="0.8" y="10" width="24.4" height="6" fill="#bdd3e8" stroke="#555" stroke-width="1.3"/><rect x="0.8" y="19.2" width="24.4" height="6" fill="#bdd3e8" stroke="#555" stroke-width="1.3"/></svg>
<svg style="position:absolute;left:1204px;top:261px" width="26" height="26" viewBox="0 0 26 26" ><rect x="0.6" y="1.6" width="24.8" height="4.6" fill="#bdd3e8" stroke="#888" stroke-width="1.1"/><path d="M9 11 H25" stroke="#888" stroke-width="1.5"/><path d="M9 17.5 H25" stroke="#777" stroke-width="1.5"/><path d="M9 23.5 H25" stroke="#bbb" stroke-width="1.5"/></svg>
<div class="a" style="left:1241px;top:257px;width:34px;height:34px;background:#c5d6e7;"></div>
<svg style="position:absolute;left:1243px;top:261px" width="26" height="26" viewBox="0 0 26 26" ><path d="M1.5 5 V20 Q1.5 23 4.5 23 H8 M1.5 9.5 H8 M1.5 16.5 H11" fill="none" stroke="#777" stroke-width="1.3"/><rect x="0.8" y="0.8" width="15" height="3.6" rx="0.8" fill="#ccc" stroke="#777" stroke-width="1.2"/><rect x="8.5" y="7.8" width="12.5" height="3.4" rx="0.8" fill="#ccc" stroke="#777" stroke-width="1.2"/><rect x="11.5" y="14.7" width="13.5" height="3.6" rx="1.2" fill="#fff" stroke="#2f6aa8" stroke-width="1.6"/><rect x="8.5" y="21.6" width="12.5" height="3.4" rx="0.8" fill="#ccc" stroke="#777" stroke-width="1.2"/></svg>
<svg style="position:absolute;left:1282px;top:261px" width="26" height="26" viewBox="0 0 26 26" ><rect x="0.7" y="0.7" width="24.6" height="24.6" fill="#fff" stroke="#555" stroke-width="1.3"/><path d="M0.7 5.3 H25.3" stroke="#999" stroke-width="0.9"/><path d="M0.7 10.3 H25.3" stroke="#999" stroke-width="0.9"/><path d="M0.7 15.3 H25.3" stroke="#999" stroke-width="0.9"/><path d="M0.7 19.8 H25.3" stroke="#999" stroke-width="0.9"/><path d="M2.5 3.2 H23.5" stroke="#4a7fb5" stroke-width="1.8"/><path d="M7 8 H23.5" stroke="#4a7fb5" stroke-width="1.8"/><path d="M19 13 H23.5" stroke="#4a7fb5" stroke-width="1.8"/><path d="M12 18 H23.5" stroke="#4a7fb5" stroke-width="1.8"/><path d="M2.5 22.8 H23.5" stroke="#4a7fb5" stroke-width="1.8"/></svg>
<svg style="position:absolute;left:1321px;top:261px" width="26" height="26" viewBox="0 0 26 26" ><rect x="0.7" y="0.7" width="24.6" height="24.6" fill="#fff" stroke="#555" stroke-width="1.3"/><path d="M0.7 6.8 H25.3 M0.7 13 H25.3 M0.7 19.2 H25.3 M12.8 0.7 V25.3" stroke="#888" stroke-width="1.1"/></svg>
<div class="a" style="left:1397px;top:257px;width:2px;height:34px;background:#ababab;"></div>
<svg style="position:absolute;left:1410px;top:264px" width="21" height="21" viewBox="0 0 22 22" ><rect x="0.6" y="0.6" width="20.8" height="20.8" fill="#fff" stroke="#bbb" stroke-width="1.1"/><path d="M11 3.5 V18.5 M3.5 11 H18.5" stroke="#5b8db8" stroke-width="1.4"/><path d="M11 1.8 L13.3 5 H8.7Z M11 20.2 L13.3 17 H8.7Z M1.8 11 L5 8.7 V13.3Z M20.2 11 L17 8.7 V13.3Z" fill="#5b8db8"/></svg>
<div class="a" style="left:1443px;top:257px;width:34px;height:34px;background:#c5d6e7;"></div>
<svg style="position:absolute;left:1445px;top:261px" width="27" height="27" viewBox="0 0 28 28" ><path d="M1.5 2 Q14 -0.5 26.5 2 L16.5 14.5 V26 L11.5 22 V14.5 Z" fill="#fff" stroke="#3c3c3c" stroke-width="1.4" stroke-linejoin="round"/><path d="M3.2 2.6 Q8 1.6 12 1.5 L14 13 L11.8 14.2 Z" fill="#bdd3e8"/></svg>
<div class="a" style="left:1482px;top:257px;width:1px;height:34px;background:#ababab;"></div>
<svg style="position:absolute;left:1490px;top:264px" width="21" height="21" viewBox="0 0 22 22" ><path d="M21.21 9.66 L21.21 12.34 L18.73 13.08 L17.93 14.99 L19.17 17.28 L17.28 19.17 L14.99 17.93 L13.08 18.73 L12.34 21.21 L9.66 21.21 L8.92 18.73 L7.01 17.93 L4.72 19.17 L2.83 17.28 L4.07 14.99 L3.27 13.08 L0.79 12.34 L0.79 9.66 L3.27 8.92 L4.07 7.01 L2.83 4.72 L4.72 2.83 L7.01 4.07 L8.92 3.27 L9.66 0.79 L12.34 0.79 L13.08 3.27 L14.99 4.07 L17.28 2.83 L19.17 4.72 L17.93 7.01 L18.73 8.92Z" fill="#fff" stroke="#bdbdbd" stroke-width="1.3" stroke-linejoin="round"/><circle cx="11" cy="11" r="3.2" fill="#fff" stroke="#a9bcd0" stroke-width="1.8"/></svg>
<svg style="position:absolute;left:1517px;top:272px" width="9" height="6" viewBox="0 0 9 6" ><path d="M0.3 0.3 H8.7 L4.5 5.7Z" fill="#333"/></svg>
<div class="a" style="left:1531px;top:256px;width:1px;height:36px;background:#ababab;"></div>
<span class="a t" style="left:1540.50px;top:267.08px;font-size:15.6px;line-height:17px;color:#464646;font-weight:bold;transform-origin:0.00px 50%;transform:scaleX(1.500);">-</span>
<span class="a t" style="left:1566.50px;top:266.08px;font-size:15.6px;line-height:17px;color:#464646;letter-spacing:-0.712px;">100 %</span>
<span class="a t" style="left:1627.00px;top:266.58px;font-size:15.6px;line-height:17px;color:#464646;transform-origin:0.00px 50%;transform:scaleX(0.944);">+</span>
<div class="a" style="left:1074px;top:296px;width:798px;height:1px;background:#ababab;"></div>
<div class="a" style="left:1345px;top:297px;width:1px;height:713px;background:#ababab;"></div>
<svg style="position:absolute;left:1077.0px;top:315.0px" width="11" height="6" viewBox="0 0 11 6" ><path d="M0.2 0.2 H10.8 L5.5 5.8Z" fill="#333"/></svg>
<svg style="position:absolute;left:1102.0px;top:337.5px" width="11" height="6" viewBox="0 0 11 6" ><path d="M0.2 0.2 H10.8 L5.5 5.8Z" fill="#333"/></svg>
<svg style="position:absolute;left:1126.5px;top:359.5px" width="11" height="6" viewBox="0 0 11 6" ><path d="M0.2 0.2 H10.8 L5.5 5.8Z" fill="#333"/></svg>
<svg style="position:absolute;left:1151.0px;top:381.5px" width="11" height="6" viewBox="0 0 11 6" ><path d="M0.2 0.2 H10.8 L5.5 5.8Z" fill="#333"/></svg>
<svg style="position:absolute;left:1175.5px;top:403.5px" width="11" height="6" viewBox="0 0 11 6" ><path d="M0.2 0.2 H10.8 L5.5 5.8Z" fill="#333"/></svg>
<svg style="position:absolute;left:1100.5px;top:304.5px" width="22" height="21" viewBox="0 0 28 26" ><path d="M14 1.8 L26.3 24 H1.7 Z" fill="#fbeec4" stroke="#8a8a8a" stroke-width="1.3" stroke-linejoin="round"/><path d="M14 9.5 V17.5" stroke="#a09578" stroke-width="1.6"/><rect x="13.2" y="19.5" width="1.6" height="1.8" fill="#a09578"/></svg>
<span class="a t" style="left:1125.00px;top:307.08px;font-size:15.6px;line-height:17px;color:#333;font-weight:bold;letter-spacing:-0.022px;">Ereignisse</span>
<span class="a t" style="left:1130.00px;top:329.08px;font-size:15.6px;line-height:17px;color:#464646;">Störung</span>
<svg style="position:absolute;left:1150px;top:351px" width="21" height="17.5" viewBox="0 0 42 34" ><path d="M14 6 V3.5 Q14 1 16.5 1 H25.5 Q28 1 28 3.5 V6" fill="none" stroke="#888" stroke-width="1.6"/><rect x="1" y="5.5" width="40" height="27.5" rx="3" fill="#fff" stroke="#3c3c3c" stroke-width="1.6"/><path d="M1.8 8 Q1.8 6.3 4 6.3 H38 Q40.2 6.3 40.2 8 V18 Q30 21.5 21 21.5 Q12 21.5 1.8 18 Z" fill="#bdd3e8"/><path d="M1.5 18 Q12 21.8 21 21.8 Q30 21.8 40.5 18" fill="none" stroke="#777" stroke-width="1.3"/><circle cx="21" cy="22" r="3.2" fill="#fff" stroke="#666" stroke-width="1.4"/></svg>
<span class="a t" style="left:1175.00px;top:351.08px;font-size:15.6px;line-height:17px;color:#333;font-weight:bold;letter-spacing:-0.063px;">Aufträge</span>
<span class="a t" style="left:1178.00px;top:373.08px;font-size:15.6px;line-height:17px;color:#464646;letter-spacing:0.106px;">Reparatur</span>
<svg style="position:absolute;left:1200px;top:394px" width="20" height="20" viewBox="0 0 42 42" ><g transform="rotate(-45 21 21)"><rect x="19.3" y="12" width="4.8" height="36.5" rx="2.4" fill="#fff" stroke="#6e6e6e" stroke-width="1.4"/><path d="M11.3 3.2 Q11.3 1.9 12.6 1.7 Q28 -1.8 35.2 4.8 Q38 8.6 35.2 12.2 Q28 18.8 12.6 15.5 Q11.3 15.3 11.3 14 Z" fill="#cfcfcf" stroke="#6e6e6e" stroke-width="1.4" stroke-linejoin="round"/></g></svg>
<span class="a t" style="left:1226.00px;top:395.08px;font-size:15.6px;line-height:17px;color:#333;font-weight:bold;letter-spacing:-0.179px;">Tätigkeiten</span>
<div class="a" style="left:1222px;top:416px;width:82px;height:20px;background:#598cb9;"></div>
<span class="a t" style="left:1227.50px;top:417.08px;font-size:15.6px;line-height:17px;color:#fff;font-weight:bold;letter-spacing:0.051px;">Reparatur</span>
<div class="a" style="left:1476px;top:299px;width:1px;height:102px;background:#ababab;"></div>
<div class="a" style="left:1617px;top:299px;width:1px;height:102px;background:#ababab;"></div>
<div class="a" style="left:1747px;top:299px;width:1px;height:102px;background:#ababab;"></div>
<span class="a t" style="left:1350.00px;top:309.58px;font-size:15.6px;line-height:17px;color:#464646;letter-spacing:-0.102px;">Tätigkeitsstatus</span>
<span class="a t" style="left:1480.00px;top:309.58px;font-size:15.6px;line-height:17px;color:#464646;letter-spacing:-0.200px;">Tätigkeit</span>
<span class="a t" style="left:1620.70px;top:309.58px;font-size:15.6px;line-height:17px;color:#464646;letter-spacing:0.083px;">Beginn</span>
<span class="a t" style="left:1750.50px;top:309.58px;font-size:15.6px;line-height:17px;color:#464646;letter-spacing:0.070px;">E/F-Leistung</span>
<div class="a" style="left:1346px;top:337px;width:525px;height:1px;background:#ababab;"></div>
<span class="a t" style="left:1353.00px;top:348.08px;font-size:15.6px;line-height:17px;color:#464646;letter-spacing:-0.863px;">wie</span>
<svg style="position:absolute;left:1381.5px;top:352.5px" width="9" height="5.5" viewBox="0 0 9 5.5" ><path d="M0.2 0.2 H8.8 L4.5 5.3Z" fill="#8d8d8d"/></svg>
<div class="a" style="left:1397px;top:342px;width:74px;height:26px;background:#fff;"></div>
<span class="a t" style="left:1483.00px;top:348.08px;font-size:15.6px;line-height:17px;color:#464646;letter-spacing:-0.513px;">wie</span>
<svg style="position:absolute;left:1512.0px;top:352.5px" width="9" height="5.5" viewBox="0 0 9 5.5" ><path d="M0.2 0.2 H8.8 L4.5 5.3Z" fill="#8d8d8d"/></svg>
<div class="a" style="left:1527px;top:342px;width:86px;height:26px;background:#fff;"></div>
<span class="a t" style="left:1625.00px;top:348.08px;font-size:15.6px;line-height:17px;color:#464646;transform-origin:0.00px 50%;transform:scaleX(0.944);">=</span>
<svg style="position:absolute;left:1645.5px;top:352.5px" width="9" height="5.5" viewBox="0 0 9 5.5" ><path d="M0.2 0.2 H8.8 L4.5 5.3Z" fill="#8d8d8d"/></svg>
<div class="a" style="left:1660px;top:340px;width:83px;height:30px;background:#fff;border:1px solid #9d9d9d;box-sizing:border-box;"></div>
<svg style="position:absolute;left:1724px;top:347px" width="13.5" height="15.5" viewBox="0 0 14 15" ><rect x="0.8" y="3" width="12.4" height="11.2" fill="#fff" stroke="#8a8a8a" stroke-width="1.4"/><path d="M0.8 5.2 H13.2" stroke="#8a8a8a" stroke-width="1.6"/><path d="M3.5 0.5 V4 M7 0.5 V4 M10.5 0.5 V4" stroke="#8a8a8a" stroke-width="1.4"/><path d="M4.8 7.6 H9.2 L6.6 12.3" fill="none" stroke="#8a8a8a" stroke-width="1.2"/></svg>
<span class="a t" style="left:1754.80px;top:348.08px;font-size:15.6px;line-height:17px;color:#464646;letter-spacing:-0.763px;">wie</span>
<svg style="position:absolute;left:1784.2px;top:352.5px" width="9" height="5.5" viewBox="0 0 9 5.5" ><path d="M0.2 0.2 H8.8 L4.5 5.3Z" fill="#8d8d8d"/></svg>
<div class="a" style="left:1799px;top:342px;width:72px;height:26px;background:#fff;"></div>
<div class="a" style="left:1346px;top:372px;width:525px;height:2px;background:#a3a3a3;"></div>
<div class="a" style="left:1346px;top:374px;width:524px;height:27px;background:#598cb9;"></div>
<div class="a" style="left:1476px;top:374px;width:1px;height:27px;background:#86a9c9;"></div>
<div class="a" style="left:1617px;top:374px;width:1px;height:27px;background:#86a9c9;"></div>
<div class="a" style="left:1747px;top:374px;width:1px;height:27px;background:#86a9c9;"></div>
<div class="a" style="left:1346px;top:401px;width:524px;height:2px;background:#8fc33f;"></div>
<span class="a t" style="left:1351.00px;top:379.58px;font-size:15.6px;line-height:17px;color:#fff;letter-spacing:0.023px;">Erledigt</span>
<span class="a t" style="left:1481.00px;top:379.58px;font-size:15.6px;line-height:17px;color:#fff;letter-spacing:0.106px;">Reparatur</span>
<span class="a t" style="left:1623.80px;top:379.58px;font-size:15.6px;line-height:17px;color:#fff;letter-spacing:-0.041px;">17.04.2015</span>
<span class="a t" style="left:1753.00px;top:379.58px;font-size:15.6px;line-height:17px;color:#fff;letter-spacing:0.197px;">Eigen</span>
<div class="a" style="left:1346px;top:941px;width:524.5px;height:23px;background:#fff;"></div>
<div class="a" style="left:1368px;top:946px;width:293px;height:12px;background:#adadad;"></div>
<svg style="position:absolute;left:1354px;top:947px" width="7" height="10" viewBox="0 0 7 10" ><path d="M7 0 V10 L0 5Z" fill="#8a8a8a"/></svg>
<svg style="position:absolute;left:1856px;top:947px" width="7" height="10" viewBox="0 0 7 10" ><path d="M0 0 V10 L7 5Z" fill="#8a8a8a"/></svg>
<div class="a" style="left:1346px;top:964px;width:526px;height:1px;background:#ababab;"></div>
<svg style="position:absolute;left:1486.5px;top:977px" width="21" height="21" viewBox="0 0 22 22" ><circle cx="11" cy="11" r="9.8" fill="#fff" stroke="#a6a6a6" stroke-width="1.6"/><path d="M7 6.5 V15.5 M14.5 6.5 L9.5 11 L14.5 15.5" fill="none" stroke="#7099c2" stroke-width="1.6"/></svg>
<svg style="position:absolute;left:1523.0px;top:977px" width="21" height="21" viewBox="0 0 22 22" ><circle cx="11" cy="11" r="9.8" fill="#fff" stroke="#a6a6a6" stroke-width="1.6"/><path d="M13 6.5 L8.5 11 L13 15.5" fill="none" stroke="#7099c2" stroke-width="1.6"/></svg>
<svg style="position:absolute;left:1673.5px;top:977px" width="21" height="21" viewBox="0 0 22 22" ><circle cx="11" cy="11" r="9.8" fill="#fff" stroke="#a6a6a6" stroke-width="1.6"/><path d="M9 6.5 L13.5 11 L9 15.5" fill="none" stroke="#7099c2" stroke-width="1.6"/></svg>
<svg style="position:absolute;left:1710.0px;top:977px" width="21" height="21" viewBox="0 0 22 22" ><circle cx="11" cy="11" r="9.8" fill="#fff" stroke="#a6a6a6" stroke-width="1.6"/><path d="M15 6.5 V15.5 M7.5 6.5 L12.5 11 L7.5 15.5" fill="none" stroke="#7099c2" stroke-width="1.6"/></svg>
<span class="a t" style="left:1557.50px;top:979.58px;font-size:15.6px;line-height:17px;color:#333;transform-origin:1.00px 50%;transform:scaleX(0.786);">1</span>
<span class="a t" style="left:1582.50px;top:980.58px;font-size:15.6px;line-height:17px;color:#464646;transform-origin:0.00px 50%;transform:scaleX(1.100);">-</span>
<span class="a t" style="left:1604.00px;top:979.58px;font-size:15.6px;line-height:17px;color:#333;transform-origin:1.00px 50%;transform:scaleX(0.786);">1</span>
<span class="a t" style="left:1628.50px;top:979.58px;font-size:15.6px;line-height:17px;color:#464646;transform-origin:0.00px 50%;transform:scaleX(1.500);">/</span>
<span class="a t" style="left:1652.50px;top:979.58px;font-size:15.6px;line-height:17px;color:#333;transform-origin:1.00px 50%;transform:scaleX(0.786);">1</span>
<div class="a" style="left:1873px;top:222px;width:30px;height:789px;background:#efefef;"></div>
<div class="a" style="left:1903px;top:222px;width:5px;height:122px;background:#adadad;"></div>
<div class="a" style="left:1903px;top:347px;width:5px;height:72px;background:#adadad;"></div>
<span class="a t" style="left:1881.08px;top:311.00px;font-size:15.6px;line-height:17px;color:#464646;transform-origin:0 0;transform:rotate(-90deg);letter-spacing:0.116px;">Dokumente</span>
<svg style="position:absolute;left:1880px;top:323.5px" width="19" height="10" viewBox="0 0 20 10" ><path d="M1 1.5 Q3 2.8 6.5 2 Q8 1.6 8.6 1 V9 Q8 8.4 6.5 8 Q3 7.2 1 8.5 Z" fill="#fff" stroke="#aaa" stroke-width="1.2" stroke-linejoin="round"/><path d="M8.6 5 H19" stroke="#aaa" stroke-width="1.3"/></svg>
<span class="a t" style="left:1881.08px;top:385.70px;font-size:15.6px;line-height:17px;color:#464646;transform-origin:0 0;transform:rotate(-90deg);letter-spacing:-1.600px;">CAD</span>
<svg style="position:absolute;left:1880px;top:396px" width="19" height="16" viewBox="0 0 20 17" ><rect x="0.6" y="8.6" width="18.8" height="7.6" fill="#d4d4d4" stroke="#999" stroke-width="1.1"/><path d="M3.5 8.6 V12" stroke="#999" stroke-width="0.9"/><path d="M6.5 8.6 V12" stroke="#999" stroke-width="0.9"/><path d="M9.5 8.6 V12" stroke="#999" stroke-width="0.9"/><path d="M12.5 8.6 V12" stroke="#999" stroke-width="0.9"/><path d="M15.5 8.6 V12" stroke="#999" stroke-width="0.9"/><path d="M1 1.2 H14.5 L19 3.3 L14.5 5.4 H1Z" fill="#fff" stroke="#999" stroke-width="1.1" stroke-linejoin="round"/><rect x="1" y="1.2" width="3.6" height="4.2" fill="#8aa9c8" stroke="#999" stroke-width="0.8"/></svg>
</body></html>
